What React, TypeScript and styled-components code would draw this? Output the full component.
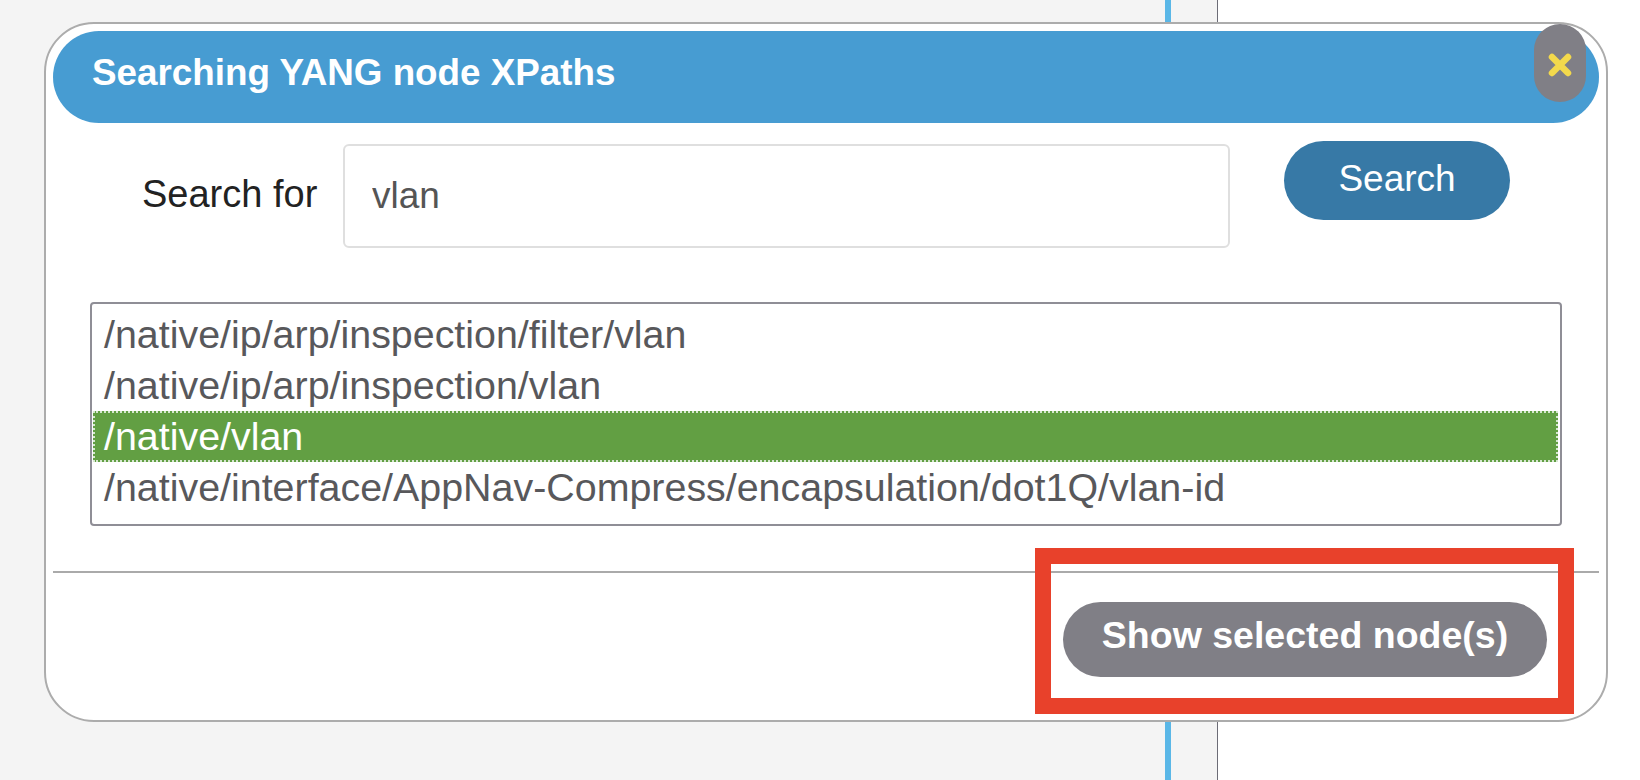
import React from "react";
import styled, { createGlobalStyle } from "styled-components";

const GlobalStyle = createGlobalStyle`
  html, body { margin: 0; padding: 0; }
  body {
    font-family: "Liberation Sans", Arial, Helvetica, sans-serif;
    background: #ffffff;
  }
  *, *::before, *::after { box-sizing: border-box; }
`;

const Page = styled.div`
  position: relative;
  display: flex;
  width: 1640px;
  height: 780px;
  overflow: hidden;
`;

const LeftPane = styled.div`
  flex: 0 0 1218px;
  display: flex;
  justify-content: flex-end;
  padding-right: 46px;
  background: #f4f4f4;
  border-right: 1px solid #6c6c76;
`;

const Splitter = styled.div`
  width: 6px;
  background: #5ab7e7;
`;

const RightPane = styled.div`
  flex: 1;
  background: #ffffff;
`;

const Dialog = styled.div`
  position: absolute;
  left: 44px;
  top: 22px;
  width: 1564px;
  height: 700px;
  padding: 7px;
  display: flex;
  flex-direction: column;
  background: #ffffff;
  border: 2px solid #acacac;
  border-radius: 50px;
`;

const Header = styled.div`
  height: 92px;
  display: flex;
  align-items: center;
  padding: 0 0 8px 39px;
  background: #479cd2;
  border-radius: 46px;
`;

const Title = styled.h1`
  margin: 0;
  font-size: 36.8px;
  font-weight: 700;
  color: #ffffff;
  white-space: nowrap;
`;

const CloseButton = styled.button`
  position: absolute;
  top: 0;
  right: 20px;
  width: 52px;
  height: 78px;
  padding: 3px 0 0 0;
  display: flex;
  align-items: center;
  justify-content: center;
  background: #807f86;
  border: none;
  border-radius: 26px;
`;

const SearchRow = styled.div`
  display: flex;
  align-items: flex-start;
  padding: 18px 0 0 89px;
`;

const Label = styled.label`
  flex: 0 0 201px;
  margin-top: 31px;
  font-size: 38px;
  line-height: 44px;
  color: #222222;
  white-space: nowrap;
`;

const SearchInput = styled.input`
  width: 887px;
  height: 104px;
  margin-top: 3px;
  padding: 0 27px;
  font-family: inherit;
  font-size: 37px;
  color: #555555;
  background: #ffffff;
  border: 2px solid #dfdfdf;
  border-radius: 6px;
  outline: none;
`;

const PillButton = styled.button<{ $tone: "blue" | "gray"; $w: number; $h: number; $bold?: boolean }>`
  width: ${(p) => p.$w}px;
  height: ${(p) => p.$h}px;
  padding: 0 0 ${(p) => (p.$bold ? 8 : 4)}px 0;
  font-family: inherit;
  font-size: ${(p) => (p.$bold ? "37.5px" : "37px")};
  font-weight: ${(p) => (p.$bold ? 700 : 400)};
  color: #ffffff;
  background: ${(p) => (p.$tone === "blue" ? "#3779a6" : "#807f86")};
  border: none;
  border-radius: ${(p) => p.$h / 2}px;
  white-space: nowrap;
`;

const SearchButtonWrap = styled.div`
  margin-left: 54px;
`;

const ListBox = styled.div`
  height: 224px;
  margin: 54px 37px 0 37px;
  padding: 5px 2px 9px 1px;
  background: #ffffff;
  border: 2px solid #8f8e96;
  border-radius: 4px;
  overflow: hidden;
`;

const Option = styled.div<{ $selected?: boolean }>`
  height: 51px;
  line-height: 51px;
  padding-left: 11px;
  font-size: 39.4px;
  white-space: nowrap;
  color: ${(p) => (p.$selected ? "#ffffff" : "#58585b")};
  background: ${(p) => (p.$selected ? "#629f43" : "transparent")};
  outline: ${(p) => (p.$selected ? "2px dotted rgba(255,255,255,0.75)" : "none")};
  outline-offset: -2px;
`;

const Divider = styled.hr`
  margin: 45px 0 0 0;
  height: 2px;
  border: none;
  background: #aaaaaa;
`;

const Footer = styled.div`
  display: flex;
  justify-content: flex-end;
  padding: 29px 52px 0 0;
`;

const Annotation = styled.div`
  position: absolute;
  left: 989px;
  top: 524px;
  width: 539px;
  height: 166px;
  border: 16px solid #e8412b;
  pointer-events: none;
`;

const paths = [
  "/native/ip/arp/inspection/filter/vlan",
  "/native/ip/arp/inspection/vlan",
  "/native/vlan",
  "/native/interface/AppNav-Compress/encapsulation/dot1Q/vlan-id",
];

export default function App() {
  return (
    <>
      <GlobalStyle />
      <Page>
        <LeftPane>
          <Splitter />
        </LeftPane>
        <RightPane />
        <Dialog>
          <Header>
            <Title>Searching YANG node XPaths</Title>
          </Header>
          <CloseButton aria-label="close">
            <svg width="26" height="24" viewBox="0 0 26 24">
              <path
                d="M5 4 L21 20 M21 4 L5 20"
                stroke="#f3d94c"
                strokeWidth="6.5"
                strokeLinecap="round"
                fill="none"
              />
            </svg>
          </CloseButton>
          <SearchRow>
            <Label>Search for</Label>
            <SearchInput defaultValue="vlan" />
            <SearchButtonWrap>
              <PillButton $tone="blue" $w={226} $h={79}>
                Search
              </PillButton>
            </SearchButtonWrap>
          </SearchRow>
          <ListBox>
            {paths.map((p) => (
              <Option key={p} $selected={p === "/native/vlan"}>
                {p}
              </Option>
            ))}
          </ListBox>
          <Divider />
          <Footer>
            <PillButton $tone="gray" $w={484} $h={75} $bold>
              Show selected node(s)
            </PillButton>
          </Footer>
          <Annotation />
        </Dialog>
      </Page>
    </>
  );
}
